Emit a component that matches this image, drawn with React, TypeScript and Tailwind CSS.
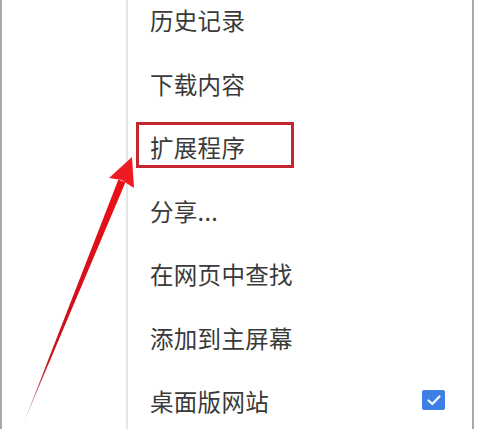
import React from 'react';

const items = ['历史记录', '下载内容', '扩展程序', '分享...', '在网页中查找', '添加到主屏幕', '桌面版网站'];

const CheckBox: React.FC = () => (
  <div className="w-[23px] h-[20px] rounded-[2px] bg-[#3d7fe6] flex items-center justify-center">
    <svg width="16" height="16" viewBox="0 0 16 16" fill="none">
      <path d="M2.5 8.5 L6.3 12 L13.5 4.5" stroke="#fff" strokeWidth="2.2" strokeLinecap="round" strokeLinejoin="round" />
    </svg>
  </div>
);

const Arrow: React.FC = () => (
  <svg className="absolute left-0 top-0 pointer-events-none" width="480" height="429" viewBox="0 0 480 429">
    <defs>
      <linearGradient id="shaft" x1="24" y1="422" x2="125" y2="180" gradientUnits="userSpaceOnUse">
        <stop offset="0" stopColor="#b07090" stopOpacity="0.6" />
        <stop offset="0.25" stopColor="#c4101c" />
        <stop offset="1" stopColor="#ec1018" />
      </linearGradient>
    </defs>
    <polygon points="24,422 118.4,179.5 125.4,182.5" fill="url(#shaft)" />
    <polygon points="132,157 109,178 121.5,180 134,188" fill="#ee1c22" />
  </svg>
);

export default function App() {
  return (
    <div className="relative w-[480px] h-[429px] bg-white overflow-hidden flex" style={{ fontFamily: '"Noto Sans CJK SC", "Noto Sans", sans-serif' }}>
      <div className="w-[2px] h-full bg-[#a8a8a8]" />
      <div className="w-[124px] h-full" />
      <div className="w-[2px] h-full bg-[#e6e6e6]" />
      <div className="w-[344px] h-full flex flex-col mt-[-11px]">
        {items.map((label, i) => (
          <div key={label} className="h-[63.5px] shrink-0 flex items-center relative">
            {i === 2 && (
              <div className="absolute left-[8px] top-[5.5px] w-[158px] h-[46px] border-[3px] border-[#c3262d]" />
            )}
            <span className="pl-[22px] text-[23.5px] leading-none text-[#3a3a3a] tracking-[0.3px]">{label}</span>
            {i === 6 && (
              <div className="ml-auto mr-[27px] mb-[4px]">
                <CheckBox />
              </div>
            )}
          </div>
        ))}
      </div>
      <div className="w-[2px] h-full bg-[#a8a8a8]" />
      <div className="flex-1 h-full" />
      <Arrow />
    </div>
  );
}
